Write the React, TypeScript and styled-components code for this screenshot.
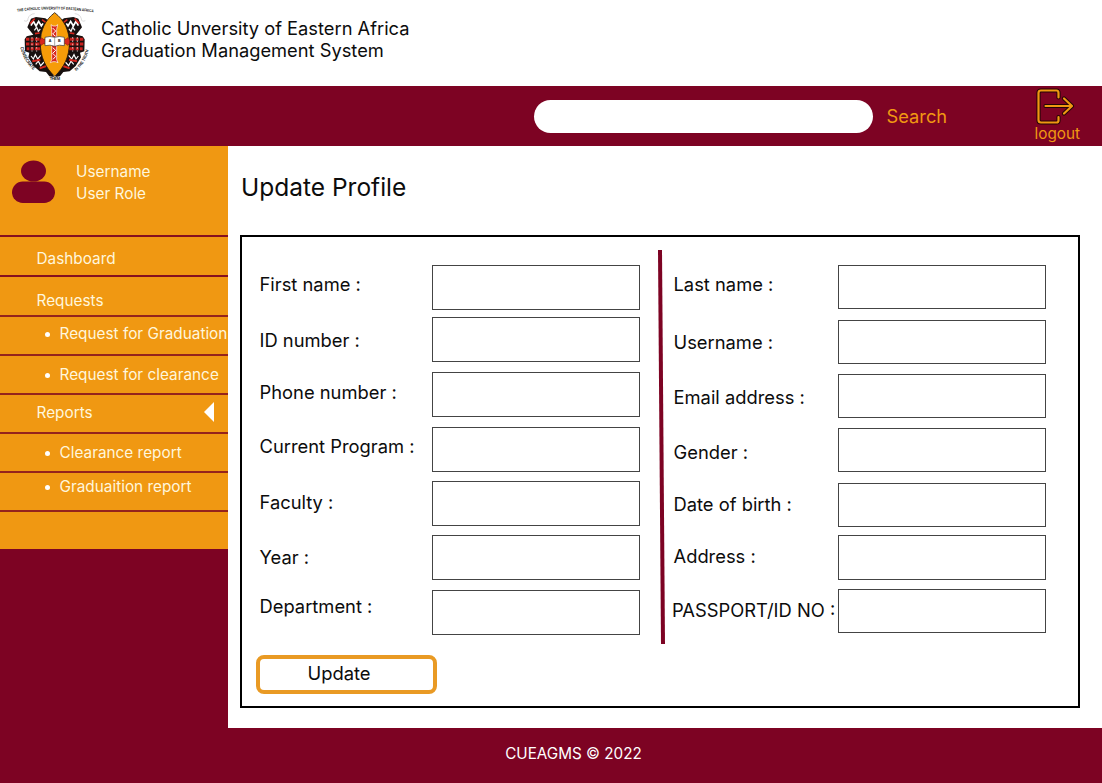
import React from "react";
import styled, { createGlobalStyle } from "styled-components";

const maroon = "#7d0323";
const orange = "#f09812";

const Global = createGlobalStyle`
  * { box-sizing: border-box; }
  body { margin: 0; background: #fff; font-family: Inter, "Liberation Sans", sans-serif; color: #0c0c0c; overflow: hidden; }
`;

const Page = styled.div`
  width: 1102px;
  height: 783px;
  display: flex;
  flex-direction: column;
`;

const Header = styled.header`
  height: 86px;
  display: flex;
  flex: none;
`;

const Crest = styled.svg`
  width: 101px;
  height: 86px;
  flex: none;
`;

const SiteTitle = styled.div`
  padding-top: 17px;
  font-size: 18.3px;
  line-height: 22px;
  white-space: nowrap;
`;

const TopBar = styled.div`
  height: 60px;
  flex: none;
  background: ${maroon};
  color: ${orange};
  display: flex;
  align-items: flex-start;
  padding-left: 534px;
`;

const SearchInput = styled.input`
  width: 339px;
  height: 33px;
  margin-top: 13.5px;
  border: 0;
  border-radius: 17px;
  background: #fff;
  padding: 0 16px;
  font: 16px Inter, sans-serif;
`;

const SearchLabel = styled.span`
  width: 148px;
  margin: 19px 0 0 13.5px;
  font-size: 18.3px;
  line-height: 22px;
`;

const Logout = styled.div`
  display: flex;
  flex-direction: column;
  font-size: 15.3px;
  line-height: 17px;
  padding-top: 2px;
  svg { display: block; width: 42px; height: 37px; }
`;

const Body = styled.div`
  display: flex;
  flex: none;
  height: 582px;
`;

const Sidebar = styled.aside`
  width: 228px;
  flex: none;
  background: ${maroon};
  color: #fff6dc;
  font-size: 15.35px;
  line-height: 18px;
`;

const UserCard = styled.div`
  height: 89px;
  display: flex;
  background: ${orange};
  padding-left: 12px;
  svg { width: 43px; height: 43px; margin-top: 13.5px; }
`;

const UserText = styled.div`
  margin: 15px 0 0 21px;
  line-height: 21.5px;
`;

const NavItem = styled.div<{ $h: number; $top: number; $sub?: boolean; $strong?: boolean }>`
  height: ${(p) => p.$h}px;
  border-top: 2px solid ${(p) => (p.$strong ? "#86101f" : "#95231c")};
  background: ${orange};
  padding: ${(p) => p.$top}px 14.5px 0 ${(p) => (p.$sub ? 45 : 36.5)}px;
  display: flex;
  align-items: flex-start;
  white-space: nowrap;
`;

const Bullet = styled.span`
  width: 5px;
  height: 5px;
  border-radius: 50%;
  background: #fff;
  flex: none;
  margin: 7px 9.5px 0 0;
`;

const Caret = styled.svg`
  width: 10px;
  height: 20px;
  margin-left: auto;
  margin-top: -2px;
`;

const Main = styled.main`
  flex: 1;
  padding: 25.5px 22px 0 12px;
`;

const PageTitle = styled.h1`
  margin: 0 0 0 1px;
  font-size: 24.5px;
  font-weight: 400;
  line-height: 30px;
  height: 63.5px;
`;

const Panel = styled.section`
  height: 473px;
  border: 2px solid #000;
  display: flex;
  padding: 13px 0 0 17.5px;
`;

const Column = styled.div`
  display: flex;
  flex-direction: column;
  padding-top: 15px;
`;

const Field = styled.label<{ $h: number; $label: number }>`
  display: flex;
  height: ${(p) => p.$h}px;
  font-size: 18.35px;
  line-height: 22px;
  white-space: nowrap;
  span { width: ${(p) => p.$label}px; flex: none; }
`;

const Caption = styled.span<{ $top: number; $outdent?: number }>`
  padding-top: ${(p) => p.$top - 0.6}px;
  text-indent: ${(p) => -(p.$outdent ?? 0)}px;
`;

const TextInput = styled.input<{ $h: number }>`
  width: 208px;
  height: ${(p) => p.$h}px;
  border: 1px solid #444;
  border-radius: 0;
  background: #fff;
  padding: 0 8px;
  font: 16px Inter, sans-serif;
`;

const Divider = styled.svg`
  width: 8px;
  height: 394px;
  margin: 0 8px 0 18px;
  flex: none;
`;

const UpdateButton = styled.button`
  width: 181px;
  height: 39px;
  margin: 20.5px 0 0 -3.5px;
  border: 4px solid #e99a24;
  border-radius: 8px;
  background: #fff;
  font: 18.4px/22px Inter, sans-serif;
  color: #0c0c0c;
  padding: 0 15px 4.5px 0;
`;

const Footer = styled.footer`
  flex: 1;
  background: ${maroon};
  color: #fff;
  text-align: center;
  font-size: 15.25px;
  line-height: 18px;
  padding: 17px 0 0 45px;
`;

type Row = { label: string; h: number; top: number; box: number; outdent?: number };

const left: Row[] = [
  { label: "First name :", h: 52, top: 9, box: 44.5 },
  { label: "ID number :", h: 55.4, top: 13, box: 45 },
  { label: "Phone number :", h: 54.6, top: 9.5, box: 44.5 },
  { label: "Current Program :", h: 54.4, top: 9, box: 45 },
  { label: "Faculty :", h: 53.6, top: 10.5, box: 44.5 },
  { label: "Year :", h: 55, top: 12, box: 45 },
  { label: "Department :", h: 45, top: 6, box: 45 },
];

const right: Row[] = [
  { label: "Last name :", h: 55, top: 9, box: 44.4 },
  { label: "Username :", h: 54, top: 12, box: 44.4 },
  { label: "Email address :", h: 54, top: 13, box: 44.4 },
  { label: "Gender :", h: 55, top: 14, box: 44.4 },
  { label: "Date of birth :", h: 52, top: 11, box: 44.4 },
  { label: "Address :", h: 54, top: 11, box: 45 },
  { label: "PASSPORT/ID NO :", h: 45, top: 11, box: 44.4, outdent: 1.5 },
];

function Fields({ rows, label }: { rows: Row[]; label: number }) {
  return (
    <>
      {rows.map((r) => (
        <Field key={r.label} $h={r.h} $label={label}>
          <Caption $top={r.top} $outdent={r.outdent}>{r.label}</Caption>
          <TextInput $h={r.box} />
        </Field>
      ))}
    </>
  );
}

function CrestHalf() {
  return (
    <g>
      <path d="M82 82 L93 56 L108 51 L136 55 L146 62 L124 100 L122 132 L128 168 L150 202 L162 231 L148 229 L138 216 L119 214 L101 198 L85 172 L88 158 L75 154 L74 118 L80 109 L100 104 L95 98Z" fill="#17100f" />
      <path d="M93 77 L100 64 L108 78 L116 64 L124 78 L129 70" fill="none" stroke="#fff" strokeWidth="5" />
      <path d="M103 91 L110 82 L115 94 L121 87" fill="none" stroke="#eee" strokeWidth="4" />
      <path d="M90 71 L104 56 M126 59 L137 67 M105 101 L119 99" stroke="#d3271f" strokeWidth="5" />
      <path d="M78 118 H119 M78 132 H119 M80 146 H121" stroke="#c8211e" strokeWidth="9" />
      <path d="M90 112 V154 M103 112 V154" stroke="#221615" strokeWidth="4" />
      <path d="M96 111 V155 M110 111 V155" stroke="#fff" strokeWidth="2" strokeDasharray="5 5" />
      <path d="M93 168 L100 177 L106 164 L113 177 L122 166 M107 193 L115 183 L122 197 L132 186" fill="none" stroke="#fff" strokeWidth="3.5" />
      <path d="M97 184 L121 179 M119 205 L139 198" stroke="#d3271f" strokeWidth="6" />
      <path d="M72 62 Q84 67 84 56 Q88 42 104 41" fill="none" stroke="#bbb" strokeWidth="1.5" />
    </g>
  );
}

function Logo() {
  return (
    <Crest viewBox="0 0 303 258">
      <defs>
        <path id="arcTop" d="M52 35 Q165 20 285 38" />
        <path id="arcLeft" d="M61 142 Q70 184 103 213" />
        <path id="arcRight" d="M228 214 Q258 189 267 147" />
      </defs>
      <CrestHalf />
      <g transform="translate(328 0) scale(-1 1)"><CrestHalf /></g>
      <path d="M164 38 C193 60 208 91 208 130 C208 169 193 202 164 229 C135 202 121 169 121 130 C121 91 135 60 164 38Z" fill="#f69c08" stroke="#27170c" strokeWidth="2.5" />
      <path d="M153 74 L159 78 H167 L173 74 L170 88 V179 L174 188 L166 185 H159 L151 188 L155 179 V88Z" fill="#d8271e" stroke="#fff" strokeWidth="2" />
      <path d="M158 84 L167 93 L158 102 L167 109 M158 143 L167 151 L158 160 L167 169 L159 178" fill="none" stroke="#fff" strokeWidth="3" />
      <path d="M119 120 L125 113 L130 118 H197 L204 113 L209 121 V130 L203 136 L197 131 H130 L124 136 L119 130Z" fill="#d8271e" stroke="#711" strokeWidth="1.5" />
      <path d="M135 112 Q150 107 164 112 Q178 107 193 112 V137 Q178 133 164 139 Q150 133 135 137Z" fill="#fff" stroke="#333" strokeWidth="2" />
      <path d="M164 112 V138" stroke="#555" strokeWidth="1.5" />
      <g fontFamily="Liberation Sans, sans-serif" fontWeight="700" fill="#111">
        <text x="146" y="127" fontSize="11">A</text>
        <text x="174" y="127" fontSize="11">B</text>
        <text fontSize="12"><textPath href="#arcTop" textLength="229" lengthAdjust="spacingAndGlyphs">THE CATHOLIC UNIVERSITY OF EASTERN AFRICA</textPath></text>
        <text fontSize="14"><textPath href="#arcLeft" textLength="80" lengthAdjust="spacingAndGlyphs">CONSECRATE</textPath></text>
        <text fontSize="13"><textPath href="#arcRight" textLength="76" lengthAdjust="spacingAndGlyphs">IN THE TRUTH</textPath></text>
        <text x="149" y="241" fontSize="12" textLength="31">THEM</text>
      </g>
    </Crest>
  );
}

const exitPath = "M23.5 9.500 V5 Q23.500 2.500 21.500 2.500 H6 Q3.500 2.500 3.500 5 V32 Q3.500 34.500 6 34.500 H21.500 Q23.500 34.500 23.500 32.500 V29 M10.500 18 H36 M29 10.500 L37 18 L29 25.500";

export default function App() {
  return (
    <Page>
      <Global />
      <Header>
        <Logo />
        <SiteTitle>Catholic Unversity of Eastern Africa<br />Graduation Management System</SiteTitle>
      </Header>
      <TopBar>
        <SearchInput aria-label="Search" />
        <SearchLabel>Search</SearchLabel>
        <Logout>
          <svg viewBox="0 0 42 37" fill="none" strokeLinecap="round" strokeLinejoin="round">
            <path d={exitPath} stroke="#250505" strokeWidth="4.2" />
            <path d={exitPath} stroke={orange} strokeWidth="2.2" />
          </svg>
          logout
        </Logout>
      </TopBar>
      <Body>
        <Sidebar>
          <UserCard>
            <svg viewBox="0 0 43 43" fill={maroon}>
              <ellipse cx="21.5" cy="11" rx="12.5" ry="10.5" />
              <rect y="21.5" width="43" height="21.5" rx="10.75" />
            </svg>
            <UserText>Username<br />User Role</UserText>
          </UserCard>
          <NavItem $h={40} $top={13} $strong>Dashboard</NavItem>
          <NavItem $h={40} $top={15} $strong>Requests</NavItem>
          <NavItem $h={39} $top={8} $sub><Bullet />Request for Graduation</NavItem>
          <NavItem $h={39} $top={9.5} $sub><Bullet />Request for clearance</NavItem>
          <NavItem $h={39} $top={8.5}>Reports
            <Caret viewBox="0 0 10 20"><path d="M10 0 V20 L0 10Z" fill="#fff" /></Caret>
          </NavItem>
          <NavItem $h={39} $top={9.5} $sub><Bullet />Clearance report</NavItem>
          <NavItem $h={39} $top={5} $sub><Bullet />Graduaition report</NavItem>
          <NavItem $h={39} $top={0} />
        </Sidebar>
        <Main>
          <PageTitle>Update Profile</PageTitle>
          <Panel>
            <Column>
              <Fields rows={left} label={172} />
              <UpdateButton>Update</UpdateButton>
            </Column>
            <Divider viewBox="0 0 8 394">
              <path d="M0 0 H4 L7 394 H3Z" fill={maroon} />
            </Divider>
            <Column>
              <Fields rows={right} label={164.5} />
            </Column>
          </Panel>
        </Main>
      </Body>
      <Footer>CUEAGMS © 2022</Footer>
    </Page>
  );
}
